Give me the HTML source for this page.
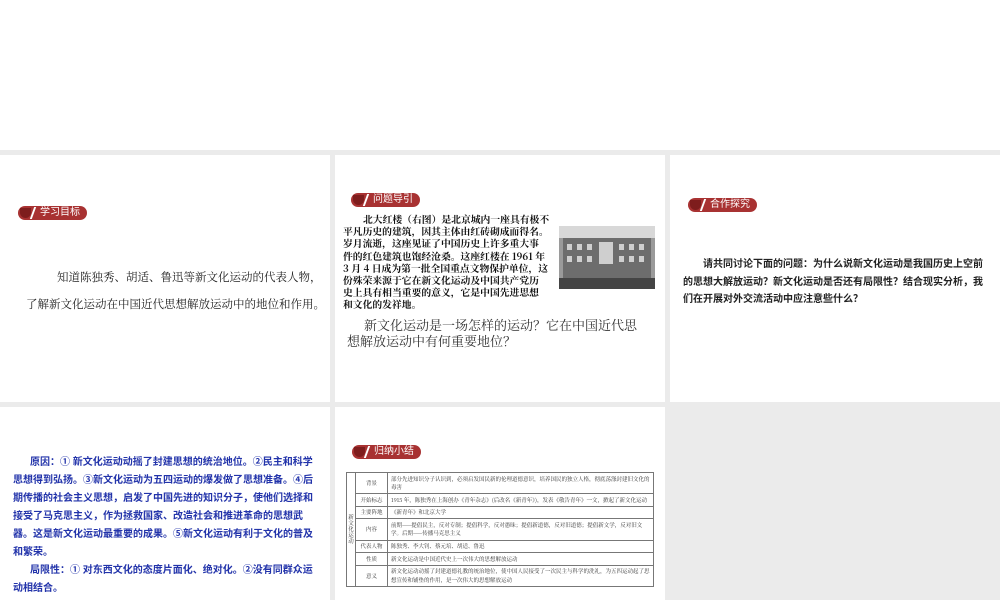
<!DOCTYPE html>
<html><head><meta charset="utf-8"><style>
*{margin:0;padding:0;box-sizing:border-box}
body{width:1000px;height:600px;position:relative;background:#ebebeb;overflow:hidden;font-family:"Liberation Sans","Noto Sans CJK SC",sans-serif}
.p{position:absolute;background:#fff}
.badge{position:absolute;height:14px;background:#a83232;border-radius:7px;color:#fff;font-size:10px;line-height:14px;padding-left:22px;padding-right:7px}
.badge:before{content:"";position:absolute;left:2px;top:2px;width:11px;height:10px;border-radius:0 0 6px 6px;background:#7e1d1d}
.badge:after{content:"";position:absolute;left:14px;top:1px;width:2px;height:12px;background:#fff;transform:skewX(-20deg)}
.t{position:absolute;color:#222;white-space:nowrap}
table{border-collapse:collapse;font-family:"Noto Serif CJK SC",serif;font-size:5.5px;color:#333}
td{border:1px solid #777;padding:1.5px 3px;line-height:8.6px}
</style></head><body>
<div class="p" style="left:0;top:0;width:1000px;height:150px"></div>
<div class="p" style="left:0;top:155px;width:330px;height:247px"></div>
<div class="p" style="left:335px;top:155px;width:330px;height:247px"></div>
<div class="p" style="left:670px;top:155px;width:330px;height:247px"></div>
<div class="p" style="left:0;top:407px;width:330px;height:193px"></div>
<div class="p" style="left:335px;top:407px;width:330px;height:193px"></div>

<div class="badge" style="left:18px;top:206px">学习目标</div>
<div class="t" style="left:26px;top:264px;font-family:'Noto Serif CJK SC',serif;font-size:11.5px;line-height:27px"><span style="padding-left:31px">知道陈独秀、胡适、鲁迅等新文化运动的代表人物，</span><br>了解新文化运动在中国近代思想解放运动中的地位和作用。</div>

<div class="badge" style="left:351px;top:193px">问题导引</div>
<div class="t" style="left:343px;top:213px;font-family:'Noto Serif CJK SC',serif;font-weight:bold;font-size:9.8px;line-height:12.2px;color:#111"><span style="padding-left:20px">北大红楼（右图）是北京城内一座具有极不</span><br>平凡历史的建筑，因其主体由红砖砌成而得名。<br>岁月流逝，这座见证了中国历史上许多重大事<br>件的红色建筑也饱经沧桑。这座红楼在 1961 年<br>3 月 4 日成为第一批全国重点文物保护单位，这<br>份殊荣来源于它在新文化运动及中国共产党历<br>史上具有相当重要的意义，它是中国先进思想<br>和文化的发祥地。</div>
<svg style="position:absolute;left:559px;top:226px" width="96" height="63"><rect width="96" height="63" fill="#9a9a9a"/><rect x="0" y="0" width="96" height="12" fill="#d8d8d8"/><rect x="4" y="12" width="88" height="44" fill="#6d6d6d"/><g fill="#cfcfcf"><rect x="8" y="18" width="5" height="6"/><rect x="18" y="18" width="5" height="6"/><rect x="28" y="18" width="5" height="6"/><rect x="60" y="18" width="5" height="6"/><rect x="70" y="18" width="5" height="6"/><rect x="80" y="18" width="5" height="6"/><rect x="8" y="30" width="5" height="6"/><rect x="18" y="30" width="5" height="6"/><rect x="28" y="30" width="5" height="6"/><rect x="60" y="30" width="5" height="6"/><rect x="70" y="30" width="5" height="6"/><rect x="80" y="30" width="5" height="6"/><rect x="40" y="16" width="14" height="22"/></g><rect x="0" y="52" width="96" height="11" fill="#444"/></svg>
<div class="t" style="left:347px;top:317px;font-family:'Noto Serif CJK SC',serif;font-size:13px;line-height:15.5px;color:#333"><span style="padding-left:17px">新文化运动是一场怎样的运动？它在中国近代思</span><br>想解放运动中有何重要地位？</div>

<div class="badge" style="left:688px;top:198px">合作探究</div>
<div class="t" style="left:683px;top:256px;font-weight:bold;font-size:10px;line-height:17.5px"><span style="padding-left:20px">请共同讨论下面的问题：为什么说新文化运动是我国历史上空前</span><br>的思想大解放运动？新文化运动是否还有局限性？结合现实分析，我<br>们在开展对外交流活动中应注意些什么？</div>

<div class="t" style="left:13px;top:454px;font-weight:bold;font-size:10px;line-height:18px;color:#2233aa"><span style="padding-left:17px">原因：① 新文化运动动摇了封建思想的统治地位。②民主和科学</span><br>思想得到弘扬。③新文化运动为五四运动的爆发做了思想准备。④后<br>期传播的社会主义思想，启发了中国先进的知识分子，使他们选择和<br>接受了马克思主义，作为拯救国家、改造社会和推进革命的思想武<br>器。这是新文化运动最重要的成果。⑤新文化运动有利于文化的普及<br>和繁荣。<br><span style="padding-left:17px">局限性：① 对东西文化的态度片面化、绝对化。②没有同群众运</span><br>动相结合。</div>

<div class="badge" style="left:352px;top:445px">归纳小结</div>
<table style="position:absolute;left:346px;top:472px;width:308px">
<tr><td rowspan="8" style="width:9px;padding:0 1px;text-align:center;line-height:6px">新<br>文<br>化<br>运<br>动</td><td style="width:32px;text-align:center">背景</td><td>部分先进知识分子认识到，必须启发国民新的伦理道德意识，培养国民的独立人格，彻底荡涤封建旧文化的毒害</td></tr>
<tr><td style="text-align:center">开始标志</td><td>1915 年，陈独秀在上海创办《青年杂志》(后改名《新青年》)，发表《敬告青年》一文，掀起了新文化运动</td></tr>
<tr><td style="text-align:center">主要阵地</td><td>《新青年》和北京大学</td></tr>
<tr><td style="text-align:center">内容</td><td>前期——提倡民主，反对专制；提倡科学，反对愚昧；提倡新道德，反对旧道德；提倡新文学，反对旧文学。后期——传播马克思主义</td></tr>
<tr><td style="text-align:center">代表人物</td><td>陈独秀、李大钊、蔡元培、胡适、鲁迅</td></tr>
<tr><td style="text-align:center">性质</td><td>新文化运动是中国近代史上一次伟大的思想解放运动</td></tr>
<tr><td style="text-align:center">意义</td><td>新文化运动动摇了封建道德礼教的统治地位，使中国人民接受了一次民主与科学的洗礼，为五四运动起了思想宣传和铺垫的作用，是一次伟大的思想解放运动</td></tr>
</table>
</body></html>
